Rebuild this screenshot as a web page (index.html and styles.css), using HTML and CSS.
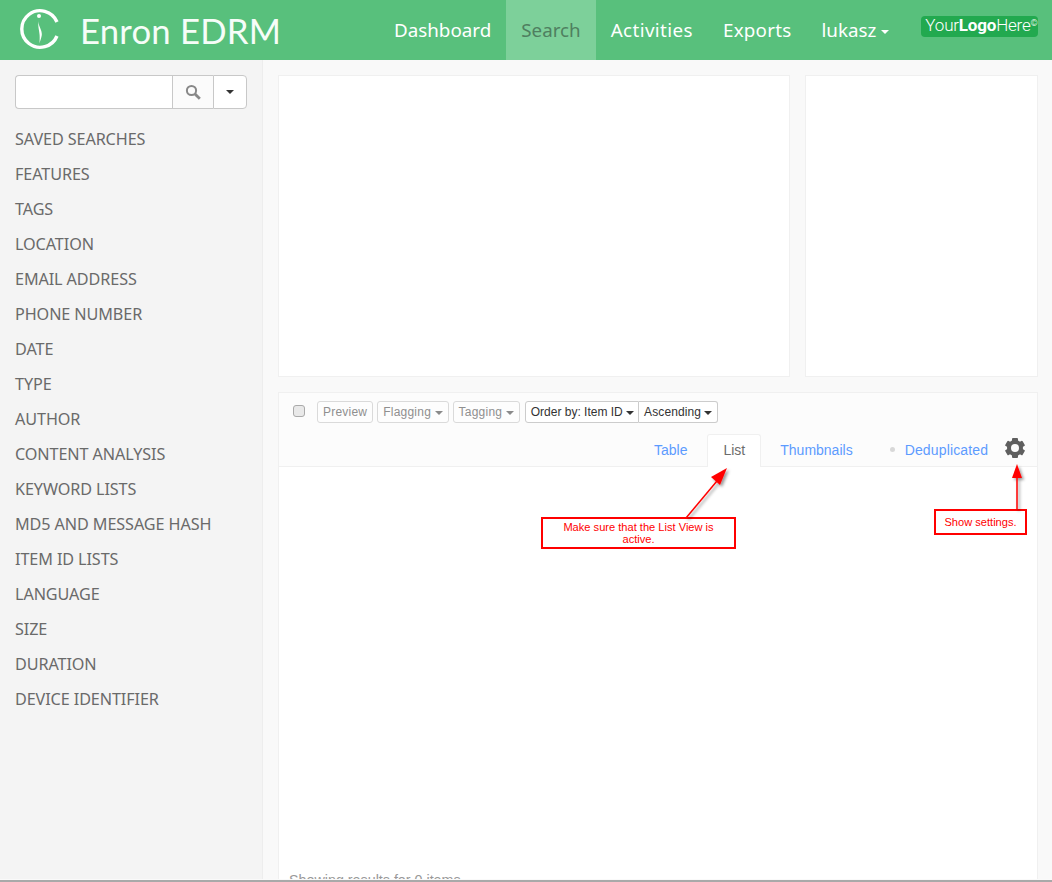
FILE: index.html
```html
<!DOCTYPE html>
<html lang="en">
<head>
<meta charset="utf-8">
<title>Enron EDRM</title>
<link rel="stylesheet" href="styles.css">
</head>
<body>
<div class="app">
  <header class="topbar">
    <a class="brand">
      <svg class="brand-icon" viewBox="0 0 44 44" width="44" height="44">
        <path d="M38 14A18.300 18.300 0 1 0 38 28" fill="none" stroke="#fff" stroke-width="3.400"/>
        <circle cx="20" cy="8" r="2" fill="#fff"/>
        <path d="M19.500 12C18.500 17 23.500 22 22.800 27C22.400 30 21 33 20.500 35.500C20.600 33 20.800 30 20.600 27C20.300 22 18.600 18 19.500 12Z" fill="#fff"/>
      </svg>
      <span class="brand-name">Enron EDRM</span>
    </a>
    <nav class="nav">
      <a class="nav-item">Dashboard</a>
      <a class="nav-item active">Search</a>
      <a class="nav-item spaced">Activities</a>
      <a class="nav-item spaced tight">Exports</a>
      <a class="nav-item">lukasz <i class="caret nav-caret"></i></a>
    </nav>
    <div class="yourlogo"><span>Your<b>Logo</b>Here<sup>©</sup></span></div>
  </header>
  <div class="body">
    <aside class="sidebar">
      <div class="search">
        <input class="search-input" type="text" aria-label="Search">
        <button class="search-btn">
          <svg viewBox="0 0 16 16" width="16" height="16"><circle cx="6.500" cy="6.500" r="4.600" fill="none" stroke="#888" stroke-width="2"/><path d="M10 10l4.800 4.800" stroke="#888" stroke-width="2.800"/></svg>
        </button>
        <button class="search-drop"><i class="caret dark"></i></button>
      </div>
      <ul class="facets">
        <li>SAVED SEARCHES</li>
        <li>FEATURES</li>
        <li>TAGS</li>
        <li>LOCATION</li>
        <li>EMAIL ADDRESS</li>
        <li>PHONE NUMBER</li>
        <li>DATE</li>
        <li>TYPE</li>
        <li>AUTHOR</li>
        <li>CONTENT ANALYSIS</li>
        <li>KEYWORD LISTS</li>
        <li>MD5 AND MESSAGE HASH</li>
        <li>ITEM ID LISTS</li>
        <li>LANGUAGE</li>
        <li>SIZE</li>
        <li>DURATION</li>
        <li>DEVICE IDENTIFIER</li>
      </ul>
    </aside>
    <main class="main">
      <div class="charts">
        <section class="panel chart-wide"></section>
        <section class="panel chart-narrow"></section>
      </div>
      <section class="panel results">
        <div class="results-head">
          <div class="toolbar">
            <input class="check" type="checkbox" aria-label="Select all">
            <button class="btn off">Preview</button>
            <button class="btn off">Flagging <i class="caret grey"></i></button>
            <button class="btn off">Tagging <i class="caret grey"></i></button>
            <div class="btn-group">
              <button class="btn order">Order by: Item ID <i class="caret dark"></i></button>
              <button class="btn asc">Ascending <i class="caret dark"></i></button>
            </div>
          </div>
          <div class="tabs">
            <a class="tab">Table</a>
            <a class="tab current">List</a>
            <a class="tab">Thumbnails</a>
            <i class="dot"></i>
            <a class="dedup">Deduplicated</a>
            <svg class="gear" viewBox="0 0 22 22" width="22" height="22">
              <g fill="#5f5f5f">
                <circle cx="11" cy="11" r="8"/>
                <rect x="8" y="1" width="6" height="20" rx="1"/>
                <rect x="8" y="1" width="6" height="20" rx="1" transform="rotate(60 11 11)"/>
                <rect x="8" y="1" width="6" height="20" rx="1" transform="rotate(120 11 11)"/>
              </g>
              <circle cx="11" cy="11" r="4" fill="#fcfcfc"/>
            </svg>
          </div>
        </div>
        <div class="results-body">
          <div class="count">Showing results for 0 items</div>
        </div>
      </section>
    </main>
  </div>
  <div class="callout callout-list">Make sure that the List View is active.</div>
  <div class="callout callout-gear">Show settings.</div>
  <svg class="arrows" viewBox="0 0 1052 882" width="1052" height="882">
    <defs>
      <filter id="sh" x="-50%" y="-50%" width="200%" height="200%"><feDropShadow dx="2" dy="2" stdDeviation="1.500" flood-color="#000" flood-opacity=".4"/></filter>
    </defs>
    <g filter="url(#sh)">
      <path d="M686 518L722 475" stroke="#f00" stroke-width="1.500"/>
      <path d="M727 468L720 485 711 477Z" fill="#f00"/>
      <path d="M1017 509V474" stroke="#f00" stroke-width="1.500"/>
      <path d="M1017 464L1022 478H1012Z" fill="#f00"/>
    </g>
  </svg>
  <div class="window-edge"></div>
</div>
</body>
</html>
```
FILE: styles.css
```css
* { box-sizing: border-box; }
html, body { margin: 0; height: 100%; overflow: hidden; }
body { font-family: "Liberation Sans", Arial, sans-serif; background: #fff; }
.app { position: relative; width: 1052px; height: 882px; overflow: hidden; display: flex; flex-direction: column; }

.topbar { height: 60px; flex: none; background: #58c07c; display: flex; align-items: stretch; color: #fff; }
.brand { display: flex; align-items: center; padding-left: 19px; gap: 17px; width: 379px; }
.brand-icon { flex: none; margin-top: 0; }
.brand-name { font-family: Lato, sans-serif; font-size: 34.700px; letter-spacing: .2px; color: #f6fdf8; white-space: nowrap; }
.nav { display: flex; }
.nav-item { font-family: "Noto Sans", sans-serif; font-size: 18.800px; display: flex; align-items: center; padding: 0 15px; white-space: nowrap; }
.nav-item.spaced { letter-spacing: .4px; }
.nav-item.tight { letter-spacing: .25px; }
.nav-item.active { background: #7dd09a; color: #4f7f60; }
.caret { display: inline-block; width: 0; height: 0; border-left: 4px solid transparent; border-right: 4px solid transparent; border-top: 4px solid #333; vertical-align: middle; }
.nav-caret { border-top-color: #fff; margin-left: 5px; margin-top: 3px; }
.caret.grey { border-top-color: #8a8a8a; }
.caret.dark { border-top-color: #333; }
.yourlogo { margin: 16px 0 0 17px; width: 117px; height: 21px; background: #22a94f; border-radius: 4px; color: #fff; font-family: Roboto, sans-serif; font-weight: 300; font-size: 17px; line-height: 19px; padding-left: 4px; white-space: nowrap; letter-spacing: -.2px; }
.yourlogo b { font-weight: 700; }
.yourlogo sup { font-size: 9px; vertical-align: 5px; line-height: 0; }

.body { flex: 1; display: flex; min-height: 0; }
.sidebar { width: 263px; flex: none; background: #f4f4f4; border-right: 1px solid #ededed; padding: 15px 15px 0; }
.search { display: flex; height: 34px; width: 232px; }
.search-input { width: 157px; height: 34px; border: 1px solid #c8c8c8; border-right: 0; border-radius: 4px 0 0 4px; background: #fff; padding: 0; outline: none; }
.search-btn, .search-drop { height: 34px; padding: 0; border: 1px solid #c8c8c8; display: flex; align-items: center; justify-content: center; }
.search-btn { width: 41px; background: #fbfbfb; border-right: 0; }
.search-drop { width: 34px; background: #fff; border-radius: 0 4px 4px 0; }
.facets { list-style: none; margin: 13px 0 0; padding: 0; }
.facets li { height: 35px; line-height: 35px; font-family: "Noto Sans", sans-serif; font-size: 16.200px; color: #6a6a6a; white-space: nowrap; letter-spacing: -.1px; }

.main { flex: 1; background: #f9f9f9; padding: 15px 14px 0 15px; min-width: 0; display: flex; flex-direction: column; gap: 15px; }
.panel { background: #fff; border: 1px solid #f0f0f0; }
.charts { display: flex; gap: 15px; flex: none; }
.chart-wide { width: 512px; height: 302px; }
.chart-narrow { width: 233px; height: 302px; }
.results { flex: 1; min-height: 0; display: flex; flex-direction: column; border-bottom: 0; margin-bottom: -20px; }
.results-head { background: #fcfcfc; border-bottom: 1px solid #f0f0f0; height: 74px; flex: none; position: relative; }
.toolbar { display: flex; align-items: center; padding: 8px 0 0 14px; gap: 4px; }
.check { appearance: none; width: 12px; height: 12px; margin: 0 8px 3px 0; background: #e9e9e9; border: 1px solid #aaa; border-radius: 3px; }
.btn { height: 22px; padding: 0 5px; font-family: "Liberation Sans", sans-serif; font-size: 12px; line-height: 20px; color: #333; background: #fff; border: 1px solid #ccc; border-radius: 3px; white-space: nowrap; }
.btn.off { color: #8f8f8f; border-color: #dadada; background: #fdfdfd; letter-spacing: .22px; }
.btn.order { padding: 0 4px 0 5px; }
.btn.asc { letter-spacing: .1px; }
.btn-group { display: flex; margin-left: 1px; }
.btn-group .btn:first-child { border-radius: 3px 0 0 3px; }
.btn-group .btn:last-child { border-radius: 0 3px 3px 0; border-left: 0; }
.tabs { position: absolute; right: 0; bottom: -1px; left: 0; height: 33px; display: flex; align-items: stretch; padding-left: 359px; font-size: 14px; color: #5c9bff; }
.tab { padding: 0 15px; margin-right: 3px; line-height: 31px; color: #5c9bff; border: 1px solid transparent; border-bottom: 0; }
.tab:first-child { padding-right: 16px; }
.tab.current { color: #6c6c6c; background: #fff; border-color: #f0f0f0; border-radius: 3px 3px 0 0; }
.dot { width: 5px; height: 5px; border-radius: 50%; background: #d8d8d8; margin: 13px 0 0 18px; flex: none; }
.dedup { line-height: 32px; margin-left: 10px; letter-spacing: .15px; }
.gear { margin: 3px 0 0 16px; flex: none; }
.results-body { flex: 1; position: relative; }
.count { position: absolute; left: 10px; top: 405px; font-size: 14.300px; color: #999; white-space: nowrap; }

.callout { position: absolute; background: #fff; border: 2px solid #f00; color: #f00; font-size: 11.100px; line-height: 12px; text-align: center; display: flex; align-items: center; justify-content: center; z-index: 2; }
.callout-list { left: 541px; top: 517px; width: 195px; height: 32px; padding: 0 15px; }
.callout-gear { left: 934px; top: 509px; width: 93px; height: 26px; }
.arrows { position: absolute; left: 0; top: 0; z-index: 3; pointer-events: none; }
.window-edge { position: absolute; left: 0; right: 0; bottom: 0; height: 3px; background: #a9a9a9; border-top: 1px solid #fafafa; z-index: 4; }
```
